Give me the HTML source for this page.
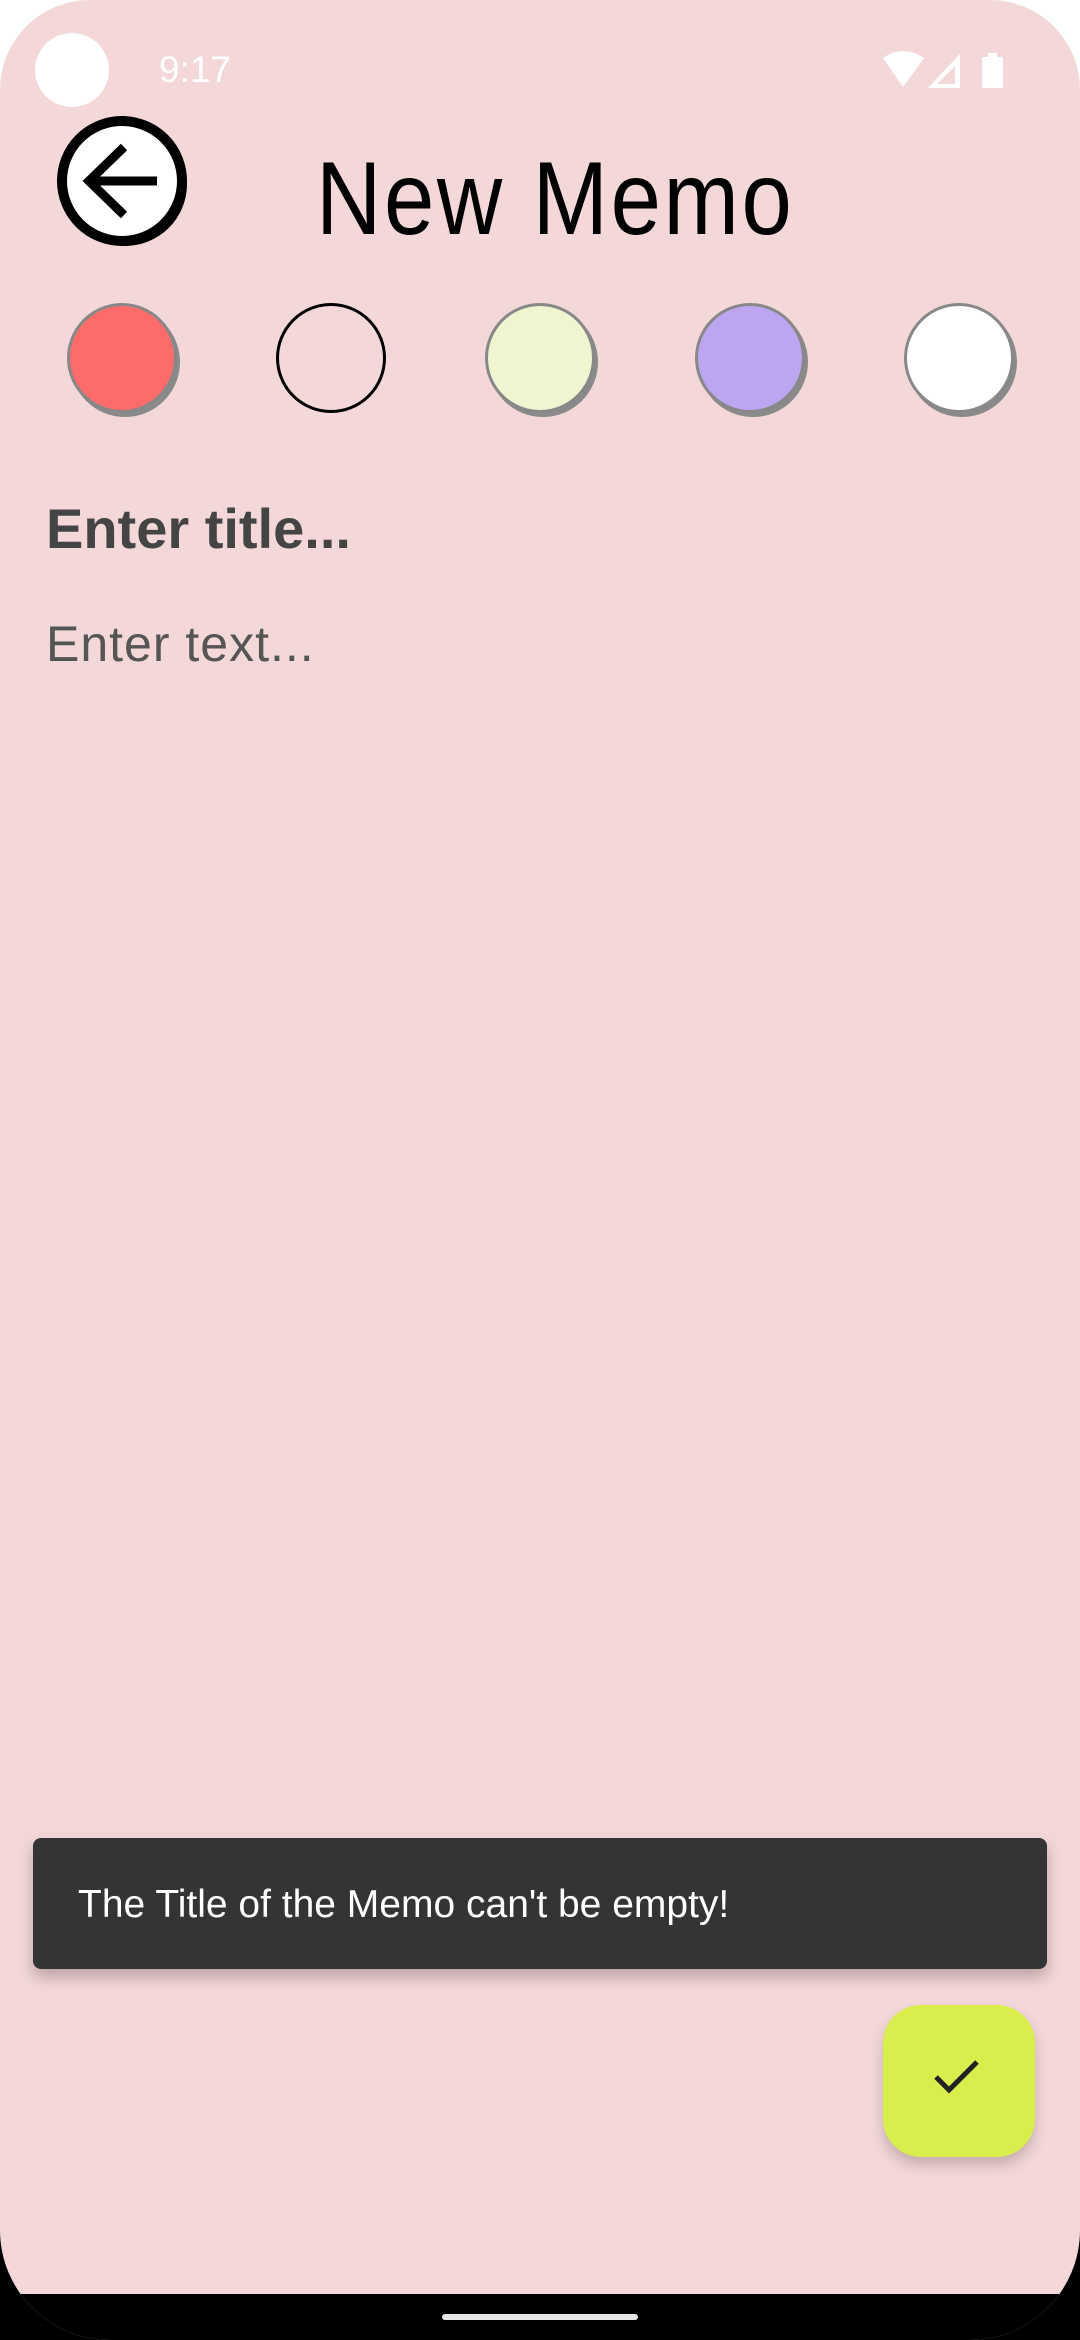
<!DOCTYPE html>
<html><head><meta charset="utf-8"><style>
*{margin:0;padding:0;box-sizing:border-box}
html,body{width:1080px;height:2340px;overflow:hidden;background:linear-gradient(#fff 0,#fff 1170px,#000 1170px)}
#s{position:absolute;left:0;top:0;width:1080px;height:2340px;background:#f4d8d9;border-radius:90px 90px 110px 110px;overflow:hidden;font-family:"Liberation Sans",sans-serif}
.c{position:absolute;width:110px;height:110px;border-radius:50%;top:303px;box-shadow:3px 4px 0 #8a8a8a}
</style></head><body>
<div id="s">
<div style="position:absolute;left:35px;top:33px;width:74px;height:74px;border-radius:50%;background:#fff"></div>
<div style="position:absolute;left:159px;top:50px;color:#fff;font-size:37px;line-height:40px">9:17</div>
<svg style="position:absolute;left:880px;top:50px" width="130" height="42" viewBox="880 50 130 42">
<path d="M883 58 Q903 44 924 58 L903 87 Z" fill="#fff"/>
<path d="M960 54 L960 88 L928 88 Z M955 66 L937 84 L955 84 Z" fill="#fff" fill-rule="evenodd"/>
<rect x="982" y="57" width="21" height="31" rx="2" fill="#fff"/><rect x="988" y="53" width="9" height="5" fill="#fff"/>
</svg>
<svg style="position:absolute;left:50px;top:108px" width="150" height="150" viewBox="50 108 150 150">
<circle cx="125" cy="184" r="62" fill="#000"/>
<circle cx="122" cy="181" r="60" fill="#fff" stroke="#000" stroke-width="10"/>
<path d="M157 181 H88 M124 147 L89 181 L124 215" fill="none" stroke="#000" stroke-width="9"/>
</svg>
<div style="position:absolute;left:316px;top:144px;font-size:104px;line-height:110px;letter-spacing:3px;color:#000;transform:scaleX(0.87);transform-origin:left;white-space:nowrap">New Memo</div>
<div class="c" style="left:67px;background:#fe6b6b;border:3px solid #888"></div>
<div class="c" style="left:276px;background:transparent;border:3px solid #000;box-shadow:none"></div>
<div class="c" style="left:485px;background:#eff5d0;border:3px solid #888"></div>
<div class="c" style="left:695px;background:#bca6f1;border:3px solid #888"></div>
<div class="c" style="left:904px;background:#fff;border:3px solid #888"></div>
<div style="position:absolute;left:46px;top:494px;font-size:56px;font-weight:bold;color:#444;line-height:70px">Enter title...</div>
<div style="position:absolute;left:46px;top:614px;font-size:50px;font-weight:300;color:#555;line-height:60px;letter-spacing:1px">Enter text...</div>
<div style="position:absolute;left:33px;top:1838px;width:1014px;height:131px;background:#343434;border-radius:8px;box-shadow:0 8px 16px rgba(0,0,0,.25)"></div>
<div style="position:absolute;left:78px;top:1882px;font-size:39px;color:#fff;line-height:46px;white-space:nowrap">The Title of the Memo can't be empty!</div>
<div style="position:absolute;left:883px;top:2005px;width:152px;height:152px;border-radius:38px;background:#d9ee4c;box-shadow:0 8px 14px rgba(0,0,0,.2)"></div>
<svg style="position:absolute;left:930px;top:2055px" width="60" height="50" viewBox="0 0 60 50"><path d="M6 22 L19 35 L47 7" fill="none" stroke="#222" stroke-width="5"/></svg>
<div style="position:absolute;left:0;top:2294px;width:1080px;height:46px;background:#000"></div>
<div style="position:absolute;left:442px;top:2314px;width:196px;height:6px;border-radius:3px;background:#e6e6e6"></div>
</div>
</body></html>
